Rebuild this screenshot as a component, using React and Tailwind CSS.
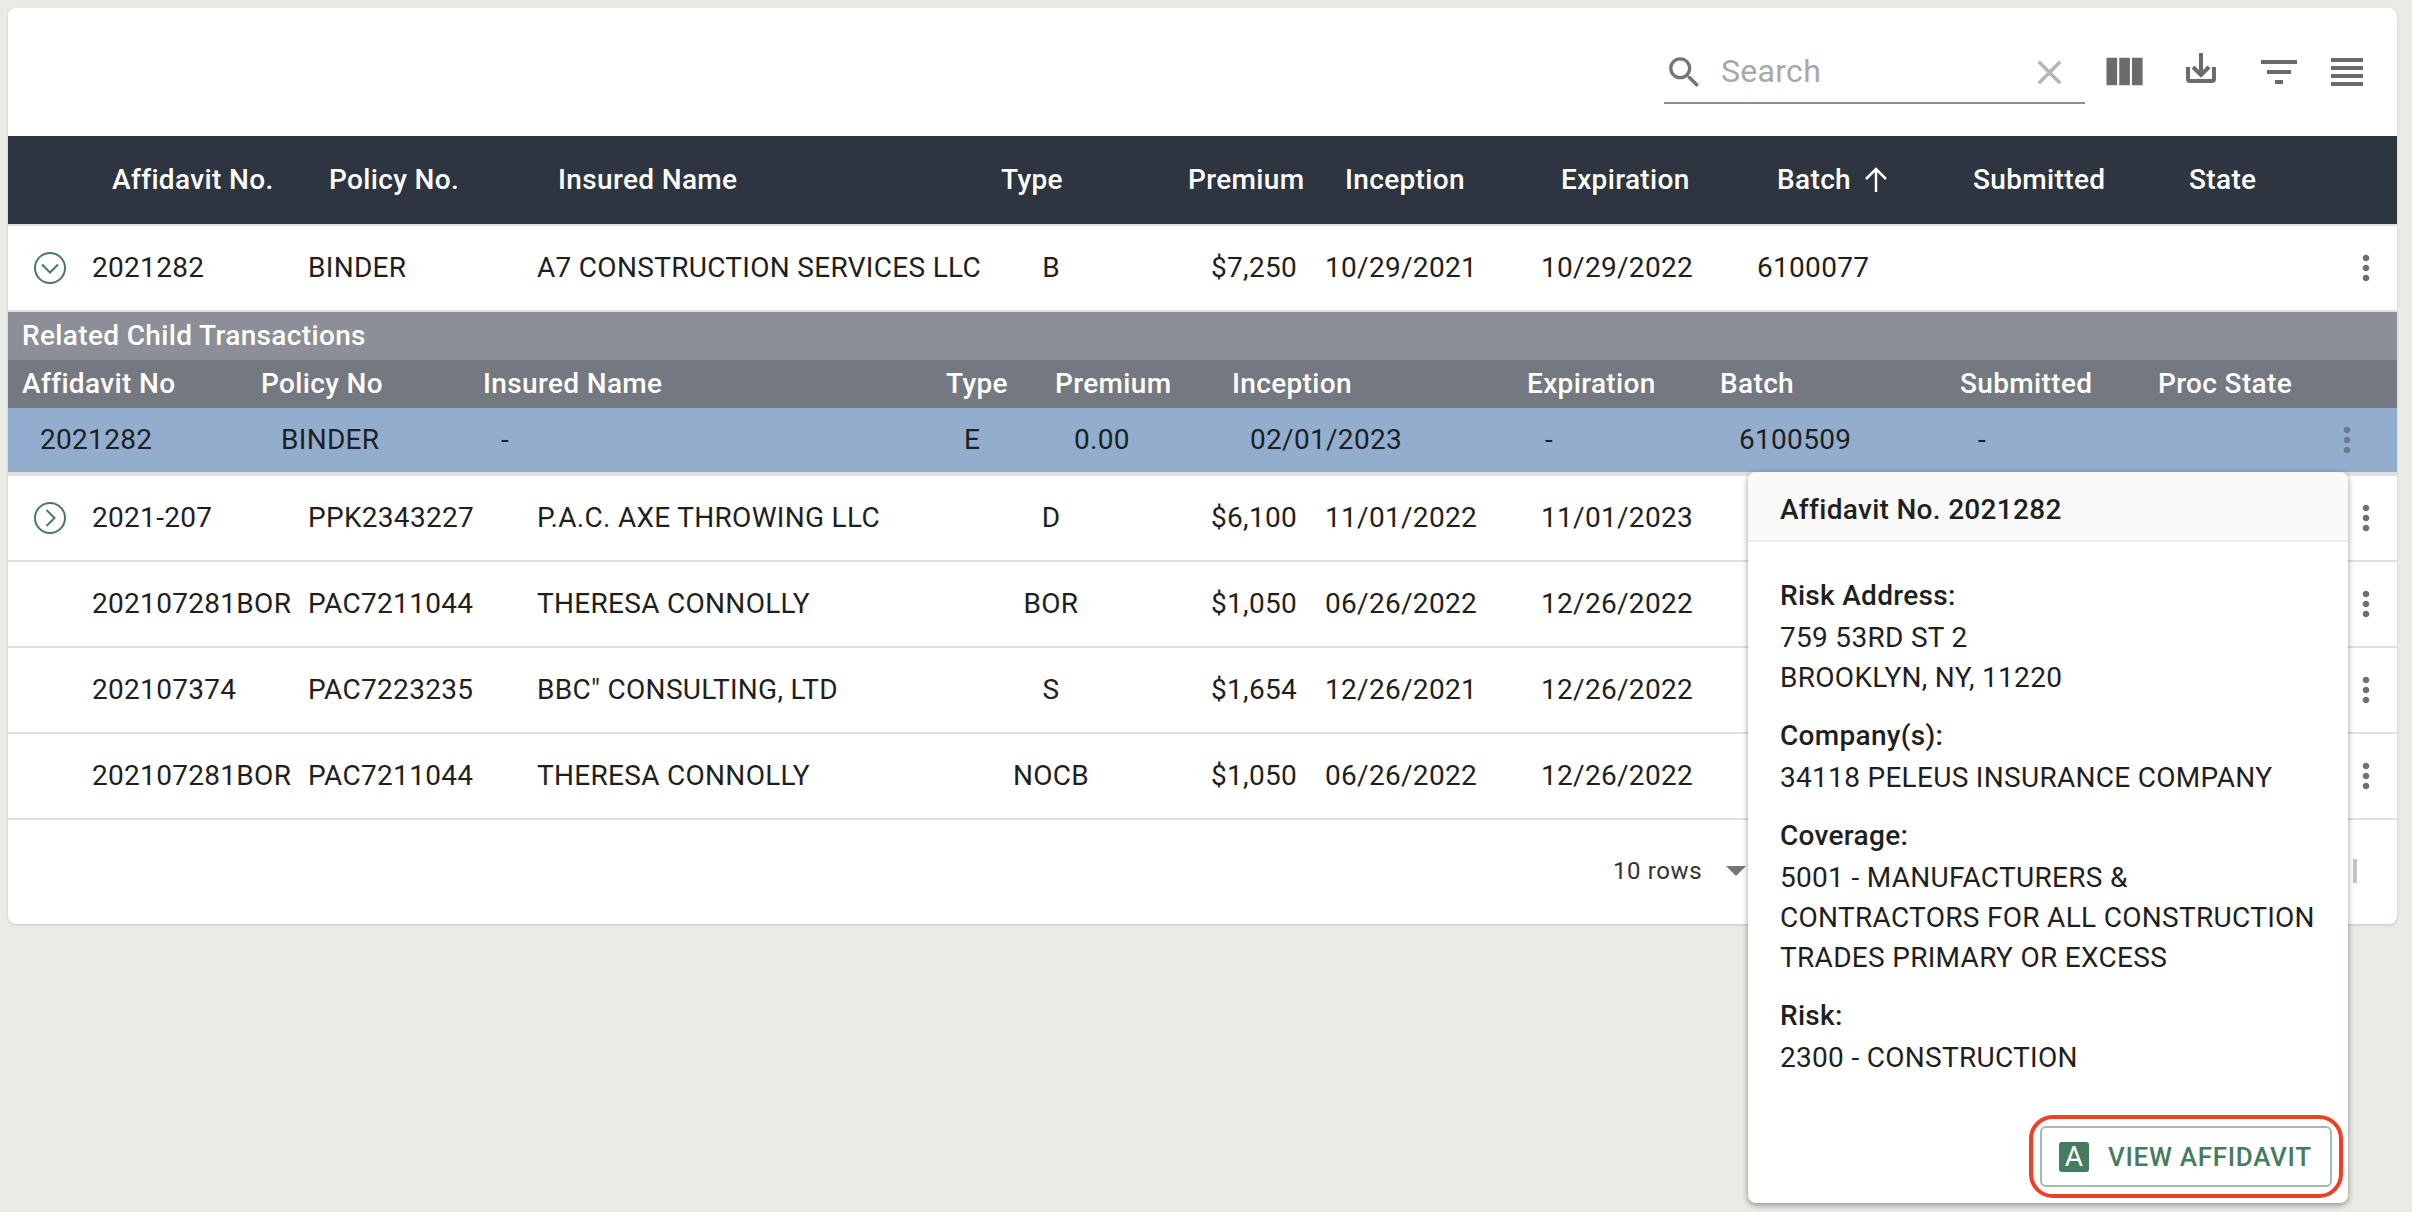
import React from 'react';

const MORE = 'M12 8c1.1 0 2-.9 2-2s-.9-2-2-2-2 .9-2 2 .9 2 2 2zm0 2c-1.1 0-2 .9-2 2s.9 2 2 2 2-.9 2-2-.9-2-2-2zm0 6c-1.1 0-2 .9-2 2s.9 2 2 2 2-.9 2-2-.9-2-2-2z';

const Icon = ({ d, className }) => (
  <svg viewBox="0 0 24 24" fill="currentColor" className={className}>
    <path d={d} />
  </svg>
);

const Expander = ({ open }) => (
  <svg viewBox="0 0 32 32" fill="none" stroke="#457b5e" strokeWidth="2" className="w-[32px] h-[32px] ml-[26px]">
    <circle cx="16" cy="16" r="15" />
    <path d={open ? 'M8 12.5l8 8 8-8' : 'M12.5 8l8 8-8 8'} />
  </svg>
);

const rows = [
  { no: '2021-207', policy: 'PPK2343227', name: 'P.A.C. AXE THROWING LLC', type: 'D', premium: '$6,100', from: '11/01/2022', to: '11/01/2023', expander: true },
  { no: '202107281BOR', policy: 'PAC7211044', name: 'THERESA CONNOLLY', type: 'BOR', premium: '$1,050', from: '06/26/2022', to: '12/26/2022' },
  { no: '202107374', policy: 'PAC7223235', name: 'BBC" CONSULTING, LTD', type: 'S', premium: '$1,654', from: '12/26/2021', to: '12/26/2022' },
  { no: '202107281BOR', policy: 'PAC7211044', name: 'THERESA CONNOLLY', type: 'NOCB', premium: '$1,050', from: '06/26/2022', to: '12/26/2022' },
];

const Row = ({ row, open, className }) => (
  <div className={`grid grid-cols-[84px_216px_229px_413px_202px_145px_244px_216px_215px_1fr_62px] items-center whitespace-nowrap ${className}`}>
    <div>{(row.expander || open) && <Expander open={open} />}</div>
    <div>{row.no}</div>
    <div>{row.policy}</div>
    <div>{row.name}</div>
    <div className="text-center">{row.type}</div>
    <div className="text-right">{row.premium}</div>
    <div className="pl-[28px]">{row.from}</div>
    <div>{row.to}</div>
    <div>{row.batch}</div>
    <div></div>
    <div className="flex justify-center text-[#707070]">
      <Icon d={MORE} className="w-[40px] h-[40px]" />
    </div>
  </div>
);

const Section = ({ label, lines }) => (
  <div className="mb-[18px]">
    <div className="font-medium mb-[2px]">{label}</div>
    {lines.map((line) => (
      <div key={line}>{line}</div>
    ))}
  </div>
);

export default function App() {
  return (
    <div className="relative min-h-screen bg-[#eaebe5] pt-[8px] pl-[8px] text-[28px] leading-[40px] tracking-[0.3px] text-[#1f1f22]" style={{ fontFamily: 'Roboto, sans-serif' }}>
      <div className="w-[2389px] h-[916px] bg-white rounded-[8px] shadow-[0_1px_3px_rgba(0,0,0,0.15)] overflow-hidden">
        {/* Toolbar */}
        <div className="h-[128px] flex justify-end items-start pt-[40px] pr-[26px] text-[#6b6b6b]">
          <div className="w-[421px] h-[56px] flex items-center border-b-2 border-[#8d8d8d] pb-[6px]">
            <Icon className="w-[41px] h-[41px] text-[#757575]" d="M15.5 14h-.79l-.28-.27C15.41 12.59 16 11.11 16 9.5 16 5.91 13.09 3 9.5 3S3 5.91 3 9.5 5.91 16 9.5 16c1.61 0 3.09-.59 4.23-1.57l.27.28v.79l5 4.99L20.49 19l-4.99-5zm-6 0C7.01 14 5 11.99 5 9.5S7.01 5 9.5 5 14 7.01 14 9.5 11.99 14 9.5 14z" />
            <input placeholder="Search" className="ml-[16px] -mt-[2px] w-[301px] outline-none text-[32px] placeholder:text-[#a8a8a8]" />
            <Icon className="ml-[7px] w-[41px] h-[41px] text-[#b5b5b5]" d="M19 6.41L17.59 5 12 10.59 6.41 5 5 6.41 10.59 12 5 17.59 6.41 19 12 13.41 17.59 19 19 17.59 13.41 12z" />
          </div>
          <Icon className="ml-[13px] -mt-[1px] w-[51px] h-[51px]" d="M10 18h5V5h-5v13zm-6 0h5V5H4v13zM16 5v13h5V5h-5z" />
          <svg viewBox="0 0 48 48" fill="none" stroke="currentColor" strokeWidth="4" className="ml-[28px] -mt-[4px] w-[48px] h-[48px]">
            <path d="M11 23v12a2 2 0 0 0 2 2h22a2 2 0 0 0 2-2V23" />
            <path d="M24 9v20" />
            <path d="M16 23l8 8 8-8" />
          </svg>
          <Icon className="ml-[30px] w-[48px] h-[48px]" d="M10 18h4v-2h-4v2zM3 6v2h18V6H3zm3 7h12v-2H6v2z" />
          <Icon className="ml-[20px] w-[48px] h-[48px]" d="M4 15h16v-2H4v2zm0 4h16v-2H4v2zm0-8h16V9H4v2zm0-6v2h16V5H4z" />
        </div>

        {/* Main header */}
        <div className="h-[88px] bg-[#2d3540] text-white font-medium tracking-[0.35px] grid grid-cols-[104px_217px_229px_443px_187px_157px_216px_216px_196px_216px_1fr] items-center">
          <div></div>
          <div>Affidavit No.</div>
          <div>Policy No.</div>
          <div>Insured Name</div>
          <div>Type</div>
          <div>Premium</div>
          <div>Inception</div>
          <div>Expiration</div>
          <div className="flex items-center gap-[12px]">
            Batch
            <svg viewBox="0 0 26 26" fill="none" stroke="currentColor" strokeWidth="2.5" className="w-[26px] h-[26px]">
              <path d="M13 25V2M3 12L13 2l10 10" />
            </svg>
          </div>
          <div>Submitted</div>
          <div>State</div>
        </div>

        <Row
          open
          className="h-[86px] border-t-2 border-[#e0e0e0]"
          row={{ no: '2021282', policy: 'BINDER', name: 'A7 CONSTRUCTION SERVICES LLC', type: 'B', premium: '$7,250', from: '10/29/2021', to: '10/29/2022', batch: '6100077' }}
        />

        {/* Child transactions */}
        <div className="border-t-2 border-[#e0e0e0]">
          <div className="h-[48px] bg-[#8c8f98] text-white font-medium tracking-[0.35px] pl-[14px] flex items-center">Related Child Transactions</div>
          <div className="h-[48px] bg-[#747881] text-white font-medium tracking-[0.35px] grid grid-cols-[239px_222px_463px_109px_177px_295px_193px_240px_198px_1fr] pl-[14px] items-center">
            <div>Affidavit No</div>
            <div>Policy No</div>
            <div>Insured Name</div>
            <div>Type</div>
            <div>Premium</div>
            <div>Inception</div>
            <div>Expiration</div>
            <div>Batch</div>
            <div>Submitted</div>
            <div>Proc State</div>
          </div>
          <div className="h-[64px] bg-[#92adcd] grid grid-cols-[241px_220px_463px_110px_176px_295px_194px_239px_1fr_62px] pl-[32px] pr-[19px] items-center">
            <div>2021282</div>
            <div>BINDER</div>
            <div>-</div>
            <div>E</div>
            <div>0.00</div>
            <div>02/01/2023</div>
            <div>-</div>
            <div>6100509</div>
            <div>-</div>
            <div className="flex justify-center text-[#6e7a8a]">
              <Icon d={MORE} className="w-[40px] h-[40px]" />
            </div>
          </div>
        </div>

        {rows.map((row, i) => (
          <Row
            key={i}
            row={row}
            className={i === 0 ? 'h-[88px] border-t-4 border-[#e0e0e0]' : 'h-[86px] border-t-2 border-[#e0e0e0]'}
          />
        ))}

        {/* Footer */}
        <div className="border-t-2 border-[#e0e0e0] h-[104px] flex items-center pl-[1605px]">
          <span className="text-[24px] tracking-[0.6px] text-[#333]">10 rows</span>
          <span className="ml-[24px] w-0 h-0 border-l-[10px] border-r-[10px] border-t-[10px] border-l-transparent border-r-transparent border-t-[#757575]"></span>
          <span className="ml-[607px] w-[4px] h-[24px] bg-[#c4c4c4]"></span>
        </div>
      </div>

      {/* Affidavit popover */}
      <div className="absolute left-[1748px] top-[472px] w-[600px] h-[731px] bg-white rounded-[8px] shadow-[0_2px_6px_rgba(0,0,0,0.4)] overflow-hidden flex flex-col">
        <div className="h-[70px] bg-[#fafafa] border-b-2 border-[#eeeeee] pl-[32px] pt-[8px] flex items-center font-medium shrink-0">
          Affidavit No. 2021282
        </div>
        <div className="pl-[32px] pt-[34px] flex-1">
          <Section label="Risk Address:" lines={['759 53RD ST 2', 'BROOKLYN, NY, 11220']} />
          <Section label="Company(s):" lines={['34118 PELEUS INSURANCE COMPANY']} />
          <Section label="Coverage:" lines={['5001 - MANUFACTURERS &', 'CONTRACTORS FOR ALL CONSTRUCTION', 'TRADES PRIMARY OR EXCESS']} />
          <Section label="Risk:" lines={['2300 - CONSTRUCTION']} />
        </div>
        <div className="flex justify-end pr-[5px] pb-[5px]">
          <div className="border-4 border-[#ee4023] rounded-[24px] p-[7px]">
            <button className="w-[292px] h-[61px] border-2 border-[#9fbdad] rounded-[6px] flex items-center pl-[17px] text-[#457b5e] font-medium text-[26px] tracking-[0.7px]">
              <span className="w-[30px] h-[30px] rounded-[3px] bg-[#457b5e] text-white flex items-center justify-center text-[28px] font-normal tracking-normal">A</span>
              <span className="ml-[19px]">VIEW AFFIDAVIT</span>
            </button>
          </div>
        </div>
      </div>
    </div>
  );
}
